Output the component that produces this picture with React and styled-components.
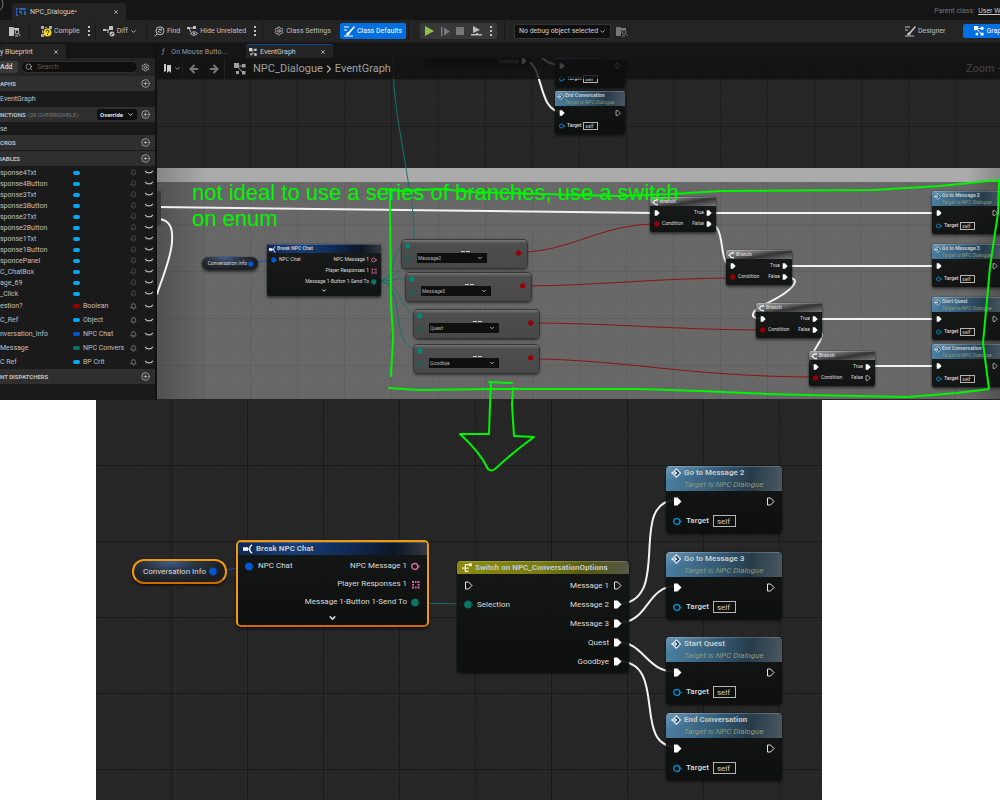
import React from 'react';
import styled, { createGlobalStyle, css, ThemeProvider } from 'styled-components';
import { ArrowLeft, ArrowRight, Bell, ChevronDown, ChevronRight, CirclePlus, Search, Settings, X } from 'lucide-react';

const GlobalStyle = createGlobalStyle`
* { box-sizing: border-box; }
body {
    margin: 0;
    background: #fff;
    font-family: Roboto, "Liberation Sans", sans-serif;
    font-size: 7px;
    line-height: 10px;
    color: #c0c0c0;
    overflow-x: hidden;
}
button, input, select { font: inherit; color: inherit; margin: 0; padding: 0; border: none; background: none; }
a { color: inherit; }
svg { display: block; flex: none; }
.lucide-chevron-down, .lucide-x { stroke-width: 3; }
`;

/* the two zoom levels of the graphs */
const farZoom = { title: 5, label: 5, head: 9, line: 7, row: 11, callRow: 13, pad: 4, gap: 2, pin: 6, radius: 2, box: 15, boxH: 8, top: 1 };
const nearZoom = { title: 8, label: 8, head: 13, line: 12, row: 19, callRow: 20, pad: 7, gap: 4, pin: 9, radius: 4, box: 23, boxH: 12, top: 2 };

const responses = ['sponse4Txt', 'sponse4Button', 'sponse3Txt', 'sponse3Button', 'sponse2Txt', 'sponse2Button',
    'sponse1Txt', 'sponse1Button', 'sponcePanel', 'C_ChatBox', 'age_69', '_Click'];

const typed = [
    { name: 'estion?', type: 'Boolean', color: '#960000' },
    { name: 'C_Ref', type: 'Object', color: '#00a8f6' },
    { name: 'nversation_Info', type: 'NPC Chat', color: '#0056d0' },
    { name: 'Message', type: 'NPC Convers', color: '#007568' },
    { name: 'C Ref', type: 'BP Crit', color: '#00a8f6' },
];

const GraphIcon = ({ size = 10 }) => (
    <svg width={size} height={size} viewBox="0 0 12 12" fill="currentColor">
        <path d="M0 0h5v5h-5zM8 1h3.5v3.5h-3.5zM8 8h3.5v3.5h-3.5zM2 8h3v3h-3z" />
        <path d="M4 3h5M4 4l5 6" stroke="currentColor" strokeWidth="1" fill="none" />
    </svg>
);

const FolderIcon = () => (
    <svg width="12" height="11" viewBox="0 0 12 11" fill="none" stroke="currentColor">
        <path d="M0 1h4l1 1h5v2h-5v6h-5z" fill="currentColor" stroke="none" />
        <circle cx="8" cy="6" r="2" />
        <path d="M9.5 7.5l2 2.500M6 10h3" />
    </svg>
);

const CompileIcon = () => (
    <svg width="11" height="11" viewBox="0 0 11 11">
        <path d="M0 0h3v3h-3zM8 0h3v3h-3zM0 8h3v3h-3zM4 1h2v1h-2zM1 4h1v3h-1zM4 4h3v2h-3z" fill="#aaa" />
        <circle cx="6.500" cy="6.500" r="4" fill="#f5d51c" />
        <path d="M5 5.500Q5 4.300 6.500 4.300T8 5.500Q8 6.300 6.500 7M6.500 8v1" stroke="#222" fill="none" />
    </svg>
);

const DiffIcon = () => (
    <svg width="12" height="11" viewBox="0 0 12 11" fill="none" stroke="currentColor">
        <path d="M0 3h3v2h-3zM6 0h4v4h-4z" fill="currentColor" stroke="none" />
        <path d="M3 4h3M5 4v3" />
        <circle cx="9" cy="8" r="2.500" fill="currentColor" stroke="none" />
        <path d="M7.800 9l2.400-2" stroke="#242424" />
    </svg>
);

const FindIcon = () => (
    <svg width="11" height="11" viewBox="0 0 11 11" fill="none" stroke="currentColor">
        <circle cx="6" cy="4.800" r="4" />
        <path d="M3 8l-2.500 2.500M4 4l4-1M4 5.500l3 1M5 3l3 1.500" />
    </svg>
);

const HideIcon = () => (
    <svg width="11" height="11" viewBox="0 0 11 11" fill="none" stroke="currentColor">
        <path d="M0 1h3v2h-3zM6 0h3v3h-3z" fill="currentColor" stroke="none" />
        <path d="M3 2h3M2 3l2 3" />
        <path d="M3.500 7.500Q7 4 10.500 7.500Q7 11 3.500 7.500z" />
        <circle cx="7" cy="7.500" r="1" fill="currentColor" stroke="none" />
    </svg>
);

const BrushIcon = () => (
    <svg width="11" height="11" viewBox="0 0 11 11" fill="none" stroke="currentColor">
        <path d="M0 1h5M0 4h3M0 10h9" />
        <path d="M2 9.500Q2 6.500 4.500 6L10 0l1 1L6 7Q5.500 9.500 2 9.500z" fill="currentColor" stroke="none" />
    </svg>
);

const Dots = () => (
    <svg width="4" height="10" viewBox="0 0 4 10" fill="currentColor">
        <path d="M1 0h2v2h-2zM1 4h2v2h-2zM1 8h2v2h-2z" />
    </svg>
);

const ClosedEye = () => (
    <svg width="8" height="5" viewBox="0 0 8 5" fill="none" stroke="currentColor" strokeWidth="1.100">
        <path d="M0 0.800Q4 5 8 0.800" />
        <path d="M1.600 2.400l-.6 1M6.400 2.400l.6 1" strokeWidth="0.700" />
    </svg>
);

const pinShapes = {
    exec: <path d="M1 0.500h3.500l4 4-4 4h-3.500z" fill="#fff" />,
    execOpen: <path d="M1.500 1h3l3.500 3.500-3.500 3.500h-3z" fill="none" stroke="#e4e4e4" />,
    dot: <path d="M4 0.500a4 4 0 1 0 .1 0zM7.500 2.800l1.500 1.700-1.500 1.700z" fill="currentColor" />,
    ring: <><circle cx="3.800" cy="4.500" r="3" fill="none" stroke="currentColor" strokeWidth="1.400" /><path d="M7.500 2.800l1.500 1.700-1.500 1.700z" fill="currentColor" /></>,
    array: <path d="M1 1h2v2h-2zM4 1h1.500v2h-1.500zM6.500 1h2v2h-2zM1 4h2v1.500h-2zM6.500 4h2v1.500h-2zM1 6.500h2v2h-2zM4 6.500h1.500v2h-1.500zM6.500 6.500h2v2h-2z" fill="currentColor" />,
};

const PinIcon = styled.svg`
    width: ${({ theme }) => theme.pin}px;
    height: ${({ theme }) => theme.pin}px;
    color: ${({ $color }) => $color || '#fff'};
`;

const Pin = ({ kind, color }) => <PinIcon viewBox="0 0 9 9" $color={color}>{pinShapes[kind]}</PinIcon>;

const headIcons = {
    call: <><path d="M6.500 1L11.500 6L6.500 11L1.500 6z" fill="#27485e" stroke="#e8f4ff" strokeWidth="1.300" /><path d="M0 6h5M5 4.300l2.200 1.700-2.200 1.700z" fill="#e8f4ff" stroke="#e8f4ff" /></>,
    split: <><path d="M0 4h6v4h-6z" fill="#fff" /><path d="M6 6h2M11 1Q8 2 8 6T11 11" stroke="#fff" strokeWidth="1.500" fill="none" /></>,
    branch: <path d="M9 1.500Q3 1.500 3 5.500T9 9.500M9 0v3M9 8v3M0 5.500h3" fill="none" stroke="#eee" strokeWidth="2" />,
    enum: <path d="M0 6h4M8 2h-4v8h4M4 6h4M9 1h2v2h-2z" fill="none" stroke="#f4f4e8" strokeWidth="1.500" />,
};

const headFills = {
    call: 'linear-gradient(165deg, rgba(255,255,255,0.18), transparent 30%), linear-gradient(100deg, #4b81a4 0%, #355a74 45%, #263c4b 72%, #4c5961 100%)',
    split: 'radial-gradient(circle at 30% 0, #174079 0, #102a55 40%, #0c1626 75%, #353a40 100%)',
    branch: 'linear-gradient(170deg, #a5a5a5 0%, #777 30%, #333 60%, #777 100%)',
    enum: 'linear-gradient(100deg, #8b8b0e 0%, #777a10 50%, #555a14 75%, #55574a 100%)',
};

const NodeBox = styled.article`
    position: absolute;
    left: ${({ $x }) => $x}px;
    top: ${({ $y }) => $y}px;
    width: ${({ $w }) => $w}px;
    padding-bottom: ${({ $bottom }) => $bottom || 2}px;
    overflow: hidden;
    border-radius: ${({ theme }) => theme.radius}px;
    background: linear-gradient(rgba(18, 22, 20, 0.93), rgba(12, 14, 13, 0.93));
    box-shadow: 0 0 1px #000, 0 2px 3px rgba(0, 0, 0, 0.5);
    font-size: ${({ theme }) => theme.label}px;
    line-height: ${({ theme }) => theme.line}px;
    color: #dcdcdc;
    ${({ $selected }) => $selected && css`
        border: 2px solid #f09a08;
        border-bottom-color: #cf6a05;
        border-radius: 5px;
    `}
`;

const NodeHead = styled.header`
    display: flex;
    align-items: flex-start;
    gap: ${({ theme }) => theme.gap - 1}px;
    min-height: ${({ theme }) => theme.head}px;
    padding: 1px ${({ theme }) => theme.pad - 2}px 0;
    background: ${({ $kind }) => headFills[$kind]};
    box-shadow: inset 0 1px 0 rgba(255, 255, 255, 0.2);
    font-size: ${({ theme }) => theme.title}px;
    white-space: nowrap;
    svg {
        width: ${({ theme }) => theme.pin + 1}px;
        height: ${({ theme }) => theme.pin + 1}px;
        margin-top: 1px;
    }
    h2 { margin: 0; font-size: inherit; font-weight: 700; color: #c4cacd; }
    p { margin: 0; font-style: italic; font-weight: 400; color: #8d9c7c; }
`;

const Rows = styled.div`
    padding: ${({ theme }) => theme.top}px ${({ theme }) => theme.pad}px 0;
`;

const Row = styled.div`
    display: flex;
    align-items: center;
    justify-content: space-between;
    height: ${({ theme, $h }) => $h || theme.row}px;
`;

const Side = styled.label`
    display: flex;
    align-items: center;
    gap: ${({ theme }) => theme.gap}px;
    white-space: nowrap;
`;

const SelfInput = styled.input`
    width: ${({ theme }) => theme.box}px;
    height: ${({ theme }) => theme.boxH}px;
    padding-left: ${({ theme }) => theme.gap - 1}px;
    border: 1px solid #b5b5b5;
    font-size: ${({ theme }) => theme.label}px;
    line-height: ${({ theme }) => theme.line - 2}px;
    color: #c8c8c8;
`;

const Expand = styled.div`
    display: flex;
    justify-content: center;
    padding-top: ${({ theme }) => theme.top - 1}px;
    svg { width: ${({ theme }) => theme.pin}px; height: ${({ theme }) => theme.line}px; stroke-width: 4; }
`;

const CallRows = styled(Rows)`
    padding-top: 0;
`;

const CallRow = styled(Row)`
    height: ${({ theme }) => theme.callRow}px;
    b { font-weight: 500; }
`;

const CallNode = ({ x, y, w, title }) => (
    <NodeBox $x={x} $y={y} $w={w}>
        <NodeHead $kind="call">
            <svg viewBox="0 0 12 12">{headIcons.call}</svg>
            <div><h2>{title}</h2><p>Target is NPC Dialogue</p></div>
        </NodeHead>
        <CallRows>
            <CallRow><Pin kind="exec" /><Pin kind="execOpen" /></CallRow>
            <CallRow>
                <Side><Pin kind="ring" color="#0a86cc" /><b>Target</b><SelfInput defaultValue="self" /></Side>
            </CallRow>
        </CallRows>
    </NodeBox>
);

const BreakNode = ({ x, y, w, row, bottom, selected }) => (
    <NodeBox $x={x} $y={y} $w={w} $bottom={bottom} $selected={selected}>
        <NodeHead $kind="split">
            <svg viewBox="0 0 12 12">{headIcons.split}</svg>
            <h2>Break NPC Chat</h2>
        </NodeHead>
        <Rows>
            <Row $h={row}>
                <Side><Pin kind="dot" color="#0058d4" />NPC Chat</Side>
                <Side>NPC Message 1<Pin kind="ring" color="#d6689c" /></Side>
            </Row>
            <Row $h={row}><span /><Side>Player Responses 1<Pin kind="array" color="#d6689c" /></Side></Row>
            <Row $h={row}><span /><Side>Message 1-Button 1-Send To<Pin kind="dot" color="#0a7567" /></Side></Row>
        </Rows>
        <Expand><ChevronDown /></Expand>
    </NodeBox>
);

const BranchNode = ({ x, y, last }) => (
    <NodeBox $x={x} $y={y} $w={66} $bottom={3}>
        <NodeHead $kind="branch">
            <svg viewBox="0 0 12 12">{headIcons.branch}</svg>
            <h2>Branch</h2>
        </NodeHead>
        <Rows>
            <Row><Pin kind="exec" /><Side>True<Pin kind="exec" /></Side></Row>
            <Row>
                <Side><Pin kind="dot" color="#960000" />Condition</Side>
                <Side>False<Pin kind={last ? 'execOpen' : 'exec'} /></Side>
            </Row>
        </Rows>
    </NodeBox>
);

const VariableBox = styled(NodeBox)`
    display: flex;
    align-items: center;
    justify-content: flex-end;
    gap: ${({ theme }) => theme.gap - 1}px;
    height: ${({ $h }) => $h}px;
    padding: 0 ${({ theme }) => theme.pad}px;
    border-radius: ${({ theme }) => theme.line}px;
    background: radial-gradient(ellipse at 40% 0, #3f5f92 0, #2b3442 35%, #1d1f22 70%);
    white-space: nowrap;
`;

const CompareBox = styled(NodeBox)`
    display: grid;
    grid-template-columns: 12px 70px 1fr;
    align-items: start;
    height: 28px;
    padding: 3px 5px 0 3px;
    border-radius: 4px;
    background: linear-gradient(#777 0, #4e4e4e 12%, #484848 100%);
    box-shadow: 0 0 1px 1px #333, 0 2px 3px rgba(0, 0, 0, 0.5);
`;

const ComparePins = styled.div`
    display: grid;
    gap: 7px;
`;

const ComparePick = styled.div`
    position: relative;
    margin-top: 10px;
    select {
        display: block;
        width: 100%;
        height: 10px;
        padding-left: 1px;
        appearance: none;
        background: #0f0f0f;
        line-height: 10px;
        color: #b5b5b5;
    }
    svg { position: absolute; right: 4px; top: 2px; width: 6px; height: 6px; }
    &::before {
        content: '';
        position: absolute;
        right: 17px;
        top: -2px;
        width: 9px;
        height: 1px;
        background: linear-gradient(90deg, #ccc 45%, transparent 45% 55%, #ccc 55%);
    }
`;

const ResultPin = styled.div`
    justify-self: end;
    padding-top: 7px;
`;

const CompareNode = ({ x, y, value }) => (
    <CompareBox $x={x} $y={y} $w={125}>
        <ComparePins><Pin kind="dot" color="#008a7a" /><Pin kind="ring" color="#006e60" /></ComparePins>
        <ComparePick>
            <select aria-label="Compare with" defaultValue={value}><option>{value}</option></select>
            <ChevronDown />
        </ComparePick>
        <ResultPin><Pin kind="dot" color="#960000" /></ResultPin>
    </CompareBox>
);

/* editor window */
const Page = styled.main`
    position: relative;
`;

const TitleBar = styled.div`
    display: flex;
    align-items: flex-end;
    height: 20px;
    background: #151515;
    > svg { align-self: flex-start; }
`;

const Tab = styled.div`
    display: flex;
    align-items: center;
    gap: ${({ $gap }) => $gap || 4}px;
    height: ${({ $tall }) => ($tall ? 17 : 14)}px;
    width: ${({ $w }) => $w}px;
    padding: 0 7px 0 ${({ $left }) => $left || 0}px;
    border-radius: 3px 3px 0 0;
    border-top: 1px solid ${({ $open }) => ($open ? '#0a4a8c' : 'transparent')};
    background: ${({ $dim }) => ($dim ? 'none' : '#242424')};
    color: ${({ $dim }) => ($dim ? '#9a9a9a' : '#d0d0d0')};
    white-space: nowrap;
    button { margin-left: auto; }
`;

const ParentClass = styled.p`
    margin: 0 -16px 4px auto;
    color: #777;
    white-space: nowrap;
    a { margin-left: 2px; color: #ccc; }
`;

const Toolbar = styled.div`
    display: flex;
    align-items: center;
    height: 23px;
    background: #242424;
    border-bottom: 1px solid #1a1a1a;
`;

const ToolGroup = styled.div`
    display: flex;
    flex: none;
    align-items: center;
    gap: ${({ $gap }) => $gap || 7}px;
    height: 22px;
    padding: 0 ${({ $right }) => $right}px 0 ${({ $left }) => $left}px;
    border-right: ${({ $end }) => ($end ? 'none' : '1px solid #1a1a1a')};
    ${({ $push }) => $push && 'margin: 0 -16px 0 auto;'}
`;

const Tool = styled.button`
    display: flex;
    align-items: center;
    gap: 2px;
    white-space: nowrap;
    ${({ $active }) => $active && css`
        height: ${$active}px;
        padding: 0 ${$active === 16 ? 4 : 11}px;
        border-radius: 2px;
        background: #0070e0;
        color: #fff;
    `}
`;

const PlayGroup = styled.div`
    display: flex;
    align-items: center;
    justify-content: space-between;
    width: 77px;
    height: 16px;
    padding: 0 4px;
    border-radius: 2px;
    background: #383838;
`;

const SelectWrap = styled.div`
    position: relative;
    select {
        width: 97px;
        height: 15px;
        padding-left: 4px;
        appearance: none;
        border: 1px solid #333;
        border-radius: 2px;
        background: #0f0f0f;
        color: #d0d0d0;
    }
    svg { position: absolute; right: 5px; top: 4px; }
`;

const Dim = styled.span`
    color: #777;
`;

const Workspace = styled.div`
    display: flex;
    background: #151515;
`;

const Sidebar = styled.aside`
    flex: none;
    display: flex;
    flex-direction: column;
    width: 157px;
    padding-top: 1px;
    border-right: 2px solid #111;
    background: #151515;
`;

const SearchRow = styled.div`
    display: flex;
    align-items: center;
    gap: 3px;
    height: 18px;
    padding-right: 5px;
    background: #242424;
`;

const AddButton = styled.button`
    width: 18px;
    height: 12px;
    border-radius: 0 2px 2px 0;
    background: #3a3a3a;
    color: #ddd;
    text-align: left;
    font-weight: 500;
`;

const SearchBox = styled.label`
    display: flex;
    flex: 1;
    align-items: center;
    gap: 4px;
    height: 12px;
    padding: 0 3px;
    border-radius: 6px;
    border: 1px solid #2e2e2e;
    background: #0f0f0f;
    input { min-width: 0; flex: 1; outline: none; }
    input::placeholder { color: #555; opacity: 1; }
`;

const SectionHead = styled.h3`
    display: flex;
    align-items: center;
    gap: 2px;
    height: 16px;
    margin: 0;
    padding-right: 5px;
    border-bottom: 1px solid #1a1a1a;
    background: #2f2f2f;
    font-size: 6px;
    font-weight: 700;
    white-space: nowrap;
    color: #c0c0c0;
    small { font-size: 6px; font-weight: 400; color: #777; }
    button:last-child { margin-left: auto; }
`;

const OverrideButton = styled.button`
    display: flex;
    align-items: center;
    gap: 4px;
    height: 11px;
    margin-left: auto;
    padding: 0 3px;
    border-radius: 2px;
    background: #0f0f0f;
    color: #e0e0e0;
    && + button:last-child { margin-left: 2px; }
`;

const PlainRow = styled.div`
    height: ${({ $h }) => $h}px;
    line-height: ${({ $h }) => $h}px;
    background: #1a1a1a;
`;

const VarList = styled.ul`
    margin: 0;
    padding: 0;
    list-style: none;
    background: #1a1a1a;
`;

const VarRow = styled.li`
    display: grid;
    grid-template-columns: 73px 7px 1fr 8px 8px;
    align-items: center;
    height: ${({ $h }) => $h}px;
    padding-right: 9px;
    white-space: nowrap;
    > span:nth-child(3) { padding-left: 3px; }
    svg:last-child { margin-left: 7px; overflow: visible; }
`;

const Pill = styled.i`
    height: 4px;
    border-radius: 2px;
    background: ${({ $color }) => $color};
`;

const Filler = styled.div`
    flex: 1;
    min-height: 14px;
    background: #1a1a1a;
`;

const GraphColumn = styled.section`
    display: flex;
    flex: 1;
    flex-direction: column;
    min-width: 0;
`;

const TabStrip = styled.div`
    display: flex;
    align-items: flex-end;
    height: 15px;
    background: #151515;
`;

const grid = (minor, major, y, line, faint) => css`
    background-image:
        linear-gradient(90deg, ${line} 1px, transparent 1px),
        linear-gradient(${line} 1px, transparent 1px),
        linear-gradient(90deg, ${faint} 1px, transparent 1px),
        linear-gradient(${faint} 1px, transparent 1px);
    background-size: ${major}px ${major}px, ${major}px ${major}px, ${minor}px ${minor}px, ${minor}px ${minor}px;
    background-position: -1px ${y}px, -1px ${y}px, -1px ${y}px, -1px ${y}px;
`;

const Canvas = styled.div`
    position: relative;
    flex: 1;
    min-height: ${({ $h }) => $h}px;
    overflow: hidden;
    background-color: #262626;
    ${({ $near }) => ($near
        ? grid(10, 76, 65, '#1a1a1a', '#292929')
        : grid(6, 47, 21, '#1d1d1d', '#282828'))}
`;

const Comment = styled.div`
    position: absolute;
    left: 0;
    right: 0;
    top: 110px;
    bottom: 1px;
    border-top: 14px solid #ababab;
    background-color: #686868;
    ${grid(6, 47, -5, '#606060', '#666')}
    &::after {
        content: '';
        position: absolute;
        inset: -14px 0 0;
        background: linear-gradient(90deg, rgba(0, 0, 0, 0.22), transparent 6% 96%, rgba(0, 0, 0, 0.2));
    }
`;

const PathBar = styled.nav`
    position: relative;
    z-index: 1;
    display: flex;
    align-items: center;
    height: 21px;
    padding-left: 5px;
    background: rgba(15, 15, 15, 0.8);
    font-size: 11px;
    line-height: 20px;
    color: #a0a0a0;
    white-space: nowrap;
    overflow: hidden;
    a { color: inherit; text-decoration: none; }
    > a:first-of-type { margin-left: 7px; }
`;

const PathButton = styled.button`
    display: flex;
    align-items: center;
    justify-content: center;
    gap: 3px;
    width: 21px;
    height: 21px;
    border-right: ${({ $line }) => ($line ? '1px solid #222' : 'none')};
    & + svg { margin-left: 9px; }
`;

const ZoomLabel = styled.span`
    flex: none;
    width: 34px;
    margin-left: auto;
    color: #3c3c3c;
    font-weight: 500;
`;

const Wires = styled.svg`
    position: absolute;
    inset: 0;
    width: 100%;
    height: 100%;
    fill: none;
    stroke-linecap: round;
    .exec { stroke: #f2f2f2; stroke-width: 2; }
    .bool { stroke: #8c1414; }
    .enum { stroke: #14756a; }
    .struct { stroke: #1158b8; }
`;

const Ghost = styled.div`
    position: absolute;
    left: ${({ $x }) => $x}px;
    top: ${({ $y }) => $y}px;
    width: ${({ $w }) => $w}px;
    height: ${({ $h }) => $h}px;
    display: flex;
    justify-content: flex-end;
    align-items: flex-start;
    gap: 2px;
    padding-right: 3px;
    border-radius: 0 0 2px 2px;
    background: ${({ $tint }) => $tint || '#101211'};
    font-size: 5px;
    line-height: 6px;
    color: #bbb;
`;

const LowerGraph = styled.section`
    display: flex;
    margin: 0 17.8% 0 9.6%;
`;

/* freehand notes drawn over both graphs */
const Note = styled.p`
    position: absolute;
    left: 192px;
    top: 180px;
    width: 500px;
    margin: 0;
    font-family: "Liberation Sans", Arial, sans-serif;
    font-size: 22px;
    line-height: 26px;
    color: #00f500;
`;

const Scribble = styled.svg`
    position: absolute;
    left: 0;
    top: 0;
    fill: none;
    stroke: #00f500;
    stroke-width: 2;
    stroke-linecap: round;
    stroke-linejoin: round;
    pointer-events: none;
`;

const AddIcon = ({ label }) => (
    <button aria-label={label}><CirclePlus size={9} strokeWidth={2} /></button>
);

const VariableRow = ({ name, type, color, h }) => (
    <VarRow $h={h}>
        <span>{name}</span>
        <Pill $color={color} />
        <span>{type}</span>
        <Bell size={7} color={type ? '#aaa' : '#666'} />
        <ClosedEye />
    </VarRow>
);

const BlueprintPanel = () => (
    <Sidebar>
        <Tab $w={66}>y Blueprint<button aria-label="Close panel"><X size={6} /></button></Tab>
        <SearchRow>
            <AddButton>Add</AddButton>
            <SearchBox><Search size={8} /><input placeholder="Search" aria-label="Search" /></SearchBox>
            <button aria-label="Panel settings"><Settings size={9} /></button>
        </SearchRow>
        <SectionHead>APHS<AddIcon label="Add graph" /></SectionHead>
        <PlainRow $h={15}>EventGraph</PlainRow>
        <SectionHead>NCTIONS <small>(39 OVERRIDABLE)</small>
            <OverrideButton>Override<ChevronDown size={7} /></OverrideButton>
            <AddIcon label="Add function" />
        </SectionHead>
        <PlainRow $h={12}>se</PlainRow>
        <SectionHead>CROS<AddIcon label="Add macro" /></SectionHead>
        <SectionHead>IABLES<AddIcon label="Add variable" /></SectionHead>
        <VarList>
            {responses.map((name) => <VariableRow key={name} name={name} color="#00a8f6" h={11} />)}
            {typed.map((item) => <VariableRow key={item.name} {...item} h={14} />)}
        </VarList>
        <SectionHead>NT DISPATCHERS<AddIcon label="Add dispatcher" /></SectionHead>
        <Filler />
    </Sidebar>
);

const BranchGraph = () => (
    <ThemeProvider theme={farZoom}>
        <Canvas $h={342}>
            <PathBar>
                <PathButton $line aria-label="Bookmarks">
                    <svg width="7" height="9" viewBox="0 0 7 9" fill="#ccc"><path d="M0 0h2v7l-2 1zM3 1h4v8l-2-2-2 2z" /></svg>
                    <ChevronDown size={7} />
                </PathButton>
                <PathButton aria-label="Back"><ArrowLeft size={12} strokeWidth={4} color="#777" /></PathButton>
                <PathButton $line aria-label="Forward"><ArrowRight size={12} strokeWidth={4} color="#777" /></PathButton>
                <GraphIcon size={12} />
                <a href="#dialogue">NPC_Dialogue</a>
                <ChevronRight size={12} strokeWidth={3} />
                <a href="#graph">EventGraph</a>
                <ZoomLabel>Zoom -3</ZoomLabel>
            </PathBar>
            <Comment />
            <Wires>
                <g transform="translate(-157 -58)">
                    <path className="exec" d="M157 207L656 213M159 219C170 220 173 228 172 242C171 258 163 276 157 294" />
                    <path className="exec" d="M523 60C545 60 536 112 562 112M541 57C548 63 552 65 564 65" />
                    <path className="exec" d="M710 213H940M787 266H940M815 319H940M869 366H940" />
                    <path className="exec" d="M709 224C728 224 716 266 733 266" />
                    <path className="exec" d="M786 278C800 277 796 285 785 293C768 305 752 307 753 316Q755 319 762 319" />
                    <path className="exec" d="M815 331C825 331 822 337 820 341L814 351C808 360 808 366 816 366" />
                    <path className="enum" d="M393 58C393 100 400 130 406 168S414 215 414 235C413 262 395 279 377 281" />
                    <path className="enum" d="M377 281C402 281 386 244 409 244M377 281C395 281 395 278 413 278M377 281C405 281 397 315 421 315M377 281C411 281 384 350 421 350" />
                    <path className="bool" d="M521 252C570 252 600 224 657 224M523 286C590 286 660 278 733 278M530 323C610 323 680 330 763 330M530 359C620 359 690 377 816 377" />
                    <path className="struct" d="M249 263L273 260" />
                </g>
            </Wires>
            <Ghost $x={0} $y={133} $w={4} $h={35} $tint="#3a3a3a" />
            <Ghost $x={268} $y={0} $w={105} $h={9}>Goodbye<Pin kind="exec" /></Ghost>
            <CallNode x={398} y={-14} w={70} title="Start Quest" />
            <CallNode x={398} y={33} w={70} title="End Conversation" />
            <VariableBox $x={45} $y={199} $w={56} $h={13}>Conversation Info<Pin kind="dot" color="#0058d4" /></VariableBox>
            <BreakNode x={110} y={186} w={114} row={11} />
            <CompareNode x={245} y={182} value="Message2" />
            <CompareNode x={249} y={215} value="Message3" />
            <CompareNode x={257} y={252} value="Quest" />
            <CompareNode x={257} y={287} value="Goodbye" />
            <BranchNode x={493} y={139} />
            <BranchNode x={569} y={192} />
            <BranchNode x={599} y={245} />
            <BranchNode x={652} y={293} last />
            <CallNode x={775} y={133} w={70} title="Go to Message 2" />
            <CallNode x={775} y={186} w={70} title="Go to Message 3" />
            <CallNode x={775} y={239} w={70} title="Start Quest" />
            <CallNode x={775} y={286} w={70} title="End Conversation" />
        </Canvas>
    </ThemeProvider>
);

const outputs = ['Message 2', 'Message 3', 'Quest', 'Goodbye'];

const SwitchGraph = () => (
    <ThemeProvider theme={nearZoom}>
        <Canvas $near $h={400}>
            <Wires>
                <g transform="translate(-96 -400)">
                    <path className="struct" d="M211 572C225 572 235 567 249 566" />
                    <path className="enum" d="M414 603L468 604" />
                    <path className="exec" d="M617 604C675 604 625 500 677 500M617 623C650 623 645 586 677 586" />
                    <path className="exec" d="M617 642C645 642 645 672 677 672M617 661C670 661 630 747 677 747" />
                </g>
            </Wires>
            <VariableBox $x={36} $y={159} $w={95} $h={25} $selected>Conversation Info<Pin kind="dot" color="#0058d4" /></VariableBox>
            <BreakNode x={140} y={140} w={193} row={18} bottom={1} selected />
            <NodeBox $x={361} $y={161} $w={172} $bottom={1}>
                <NodeHead $kind="enum">
                    <svg viewBox="0 0 12 12">{headIcons.enum}</svg>
                    <h2>Switch on NPC_ConversationOptions</h2>
                </NodeHead>
                <Rows>
                    <Row><Pin kind="execOpen" /><Side>Message 1<Pin kind="execOpen" /></Side></Row>
                    {outputs.map((name, i) => (
                        <Row key={name}>
                            {i === 0 ? <Side><Pin kind="dot" color="#0a7567" />Selection</Side> : <span />}
                            <Side>{name}<Pin kind="exec" /></Side>
                        </Row>
                    ))}
                </Rows>
            </NodeBox>
            <CallNode x={570} y={66} w={116} title="Go to Message 2" />
            <CallNode x={570} y={152} w={116} title="Go to Message 3" />
            <CallNode x={570} y={237} w={116} title="Start Quest" />
            <CallNode x={570} y={313} w={116} title="End Conversation" />
        </Canvas>
    </ThemeProvider>
);

const App = () => (
    <Page>
        <GlobalStyle />
        <TitleBar>
            <svg width="12" height="14" viewBox="0 0 12 14" fill="none" stroke="#777"><circle cx="-5" cy="4" r="8" /></svg>
            <Tab $tall $w={114} $left={4}>
                <svg width="10" height="8" viewBox="0 0 10 8" fill="#2a5db8"><path d="M0 0h2v1h-1v6h1v1h-2zM3 0h7v2h-7zM3 3h3v4h-1v-2h-2zM8 3h2v4h-2z" /></svg>
                NPC_Dialogue•
                <button aria-label="Close tab"><X size={6} /></button>
            </Tab>
            <ParentClass>Parent class: <a href="#parent">User Widget</a></ParentClass>
        </TitleBar>
        <Toolbar>
            <ToolGroup $left={9} $right={8}><Tool aria-label="Browse"><FolderIcon /></Tool></ToolGroup>
            <ToolGroup $left={11} $right={4}>
                <Tool><CompileIcon />Compile</Tool>
                <Tool aria-label="Compile options"><Dots /></Tool>
            </ToolGroup>
            <ToolGroup $left={7} $right={9}><Tool><DiffIcon />Diff<ChevronDown size={7} /></Tool></ToolGroup>
            <ToolGroup $left={7} $right={5}>
                <Tool><FindIcon />Find</Tool>
                <Tool><HideIcon />Hide Unrelated</Tool>
                <Tool aria-label="Hide options"><Dots /></Tool>
            </ToolGroup>
            <ToolGroup $left={11} $right={2} $gap={9}>
                <Tool><Settings size={10} />Class Settings</Tool>
                <Tool $active={16}><BrushIcon />Class Defaults</Tool>
            </ToolGroup>
            <ToolGroup $left={11} $right={7}>
                <PlayGroup>
                    <Tool aria-label="Play"><svg width="10" height="10" viewBox="0 0 10 10" fill="#8bc34a"><path d="M1 0L10 5L1 10z" /></svg></Tool>
                    <Tool aria-label="Step"><svg width="9" height="9" viewBox="0 0 9 9" fill="#777"><path d="M0 0h1.500v9h-1.500zM3 0.500L9 4.500L3 8.500z" /></svg></Tool>
                    <Tool aria-label="Stop"><svg width="8" height="8" viewBox="0 0 8 8" fill="#777"><path d="M0 0h8v8h-8z" /></svg></Tool>
                    <Tool aria-label="Eject"><svg width="11" height="10" viewBox="0 0 11 10" fill="#bbb"><path d="M2 0L9 4L2 7zM0 8h4l2-1 2 1h3v1.500h-11z" /></svg></Tool>
                    <Tool aria-label="Play options"><Dots /></Tool>
                </PlayGroup>
            </ToolGroup>
            <ToolGroup $left={9} $right={0} $gap={5} $end>
                <SelectWrap>
                    <select aria-label="Debug object"><option>No debug object selected</option></select>
                    <ChevronDown size={7} />
                </SelectWrap>
                <Dim><FolderIcon /></Dim>
            </ToolGroup>
            <ToolGroup $left={0} $right={0} $gap={18} $push $end>
                <Tool><BrushIcon />Designer</Tool>
                <Tool $active={14}><GraphIcon />Graph</Tool>
            </ToolGroup>
        </Toolbar>
        <Workspace>
            <BlueprintPanel />
            <GraphColumn>
                <TabStrip>
                    <Tab $dim $w={89} $left={5} $gap={7}><i>ƒ</i>On Mouse Butto...</Tab>
                    <Tab $open $w={87} $left={3} $gap={3}>
                        <GraphIcon size={8} />EventGraph
                        <button aria-label="Close graph"><X size={6} /></button>
                    </Tab>
                </TabStrip>
                <BranchGraph />
            </GraphColumn>
        </Workspace>
        <LowerGraph><SwitchGraph /></LowerGraph>
        <Note>not ideal to use a series of branches, use a switch on enum</Note>
        <Scribble width="1000" height="480" viewBox="0 0 1000 480">
            <path d="M384 189L400 191L440 189L473 192L540 194L620 196L673 194L720 191L873 190L940 186L999 180L998 213L990 267L987 300L983 343L989 389L957 393L907 397L807 395L767 394L700 391L640 389L490 389L420 390L389 388" />
            <path d="M390 190L391 303L393 337L391 376" />
            <path d="M489 382L512 383M491 382L490 405L489 434L460 434Q480 452 488 469Q491 472 495 469Q512 453 534 437L514 436L512 405L513 388" />
        </Scribble>
    </Page>
);

export default App;
